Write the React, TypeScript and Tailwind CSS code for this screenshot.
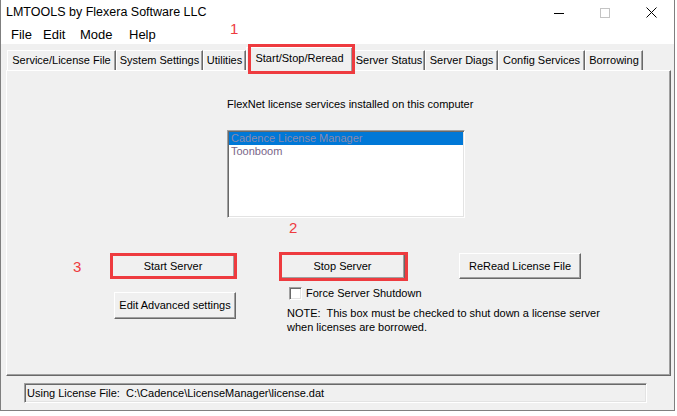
import React from "react";

const font = "font-['Liberation_Sans',Arial,sans-serif]";

// classic win32 3d edges
const raised =
  "border border-t-white border-l-white border-r-[#696969] border-b-[#696969] shadow-[inset_-1px_-1px_0_#a0a0a0]";
const sunken =
  "border border-t-[#a0a0a0] border-l-[#a0a0a0] border-r-white border-b-white shadow-[inset_1px_1px_0_#696969,inset_-1px_-1px_0_#e3e3e3]";

const tabs = [
  { label: "Service/License File", w: "w-[109px]" },
  { label: "System Settings", w: "w-[87px]" },
  { label: "Utilities", w: "w-[43px]" },
  { label: "Start/Stop/Reread", w: "w-[107px]", active: true },
  { label: "Server Status", w: "w-[72px]" },
  { label: "Server Diags", w: "w-[73px]" },
  { label: "Config Services", w: "w-[87px]" },
  { label: "Borrowing", w: "w-[58px]" },
];

function RedBox({ className }: { className: string }) {
  return (
    <div
      className={`pointer-events-none absolute border-[3px] border-[#ee3b3f] ${className}`}
    />
  );
}

function Btn({
  children,
  className,
}: {
  children: React.ReactNode;
  className: string;
}) {
  return (
    <div
      className={`${raised} relative flex shrink-0 items-center justify-center bg-[#f0f0f0] text-[11px] leading-none text-black ${className}`}
    >
      {children}
    </div>
  );
}

export default function App() {
  return (
    <div
      className={`relative h-[416px] w-[677px] overflow-hidden bg-white text-black ${font}`}
    >
      <div className="flex h-[411px] w-[675px] flex-col border-x border-b border-[#7f7f7f] bg-[#f0f0f0]">
        {/* title bar */}
        <div className="flex h-[25px] shrink-0 items-center bg-white">
          <span className="pl-[5px] text-[12.5px] leading-none">
            LMTOOLS by Flexera Software LLC
          </span>
          <div className="ml-auto flex h-full">
            <div className="flex w-[46px] items-center justify-center">
              <svg width="10" height="10" viewBox="0 0 10 10">
                <path d="M0 5.5H10" stroke="#000" strokeWidth="1" />
              </svg>
            </div>
            <div className="flex w-[46px] items-center justify-center">
              <svg width="10" height="10" viewBox="0 0 10 10">
                <rect
                  x="0.5"
                  y="0.5"
                  width="9"
                  height="9"
                  fill="none"
                  stroke="#c4c4c4"
                />
              </svg>
            </div>
            <div className="flex w-[46px] items-center justify-center">
              <svg width="11" height="11" viewBox="0 0 11 11">
                <path
                  d="M0.5 0.5L10.5 10.5M10.5 0.5L0.5 10.5"
                  stroke="#000"
                  strokeWidth="1"
                />
              </svg>
            </div>
          </div>
        </div>

        {/* menu bar */}
        <div className="flex h-[19px] shrink-0 items-center bg-white pl-[10px] text-[13px] leading-none">
          <span className="w-[32px]">File</span>
          <span className="w-[37px]">Edit</span>
          <span className="w-[49px]">Mode</span>
          <span>Help</span>
        </div>

        {/* tabs */}
        <div className="ml-[6px] mt-[3px] flex h-[23px] shrink-0 items-end text-[11px] leading-none">
          {tabs.map((t) =>
            t.active ? (
              <div
                key={t.label}
                className={`${t.w} relative z-10 -mb-px flex h-[24px] items-center justify-center border-l border-r border-t border-l-white border-r-[#696969] border-t-white bg-[#f0f0f0] pb-[2px] shadow-[inset_-1px_0_0_#a0a0a0]`}
              >
                {t.label}
                <RedBox className="left-[1px] top-[-4px] h-[30px] w-[107px]" />
              </div>
            ) : (
              <div
                key={t.label}
                className={`${t.w} flex h-[20px] items-center justify-center border-l border-r border-t border-l-white border-r-[#696969] border-t-white shadow-[inset_-1px_0_0_#a0a0a0]`}
              >
                {t.label}
              </div>
            )
          )}
        </div>

        {/* tab page */}
        <div
          className={`${raised} ml-[5px] flex h-[306px] w-[665px] shrink-0 flex-col text-[11px]`}
        >
          <p className="ml-[220px] mt-[27px] leading-[13px]">
            FlexNet license services installed on this computer
          </p>

          <div
            className={`${sunken} ml-[220px] mt-[19px] h-[88px] w-[238px] bg-white px-[1px] py-[1px]`}
          >
            <div className="bg-[#0078d7] pl-[2px] leading-[13px] text-[#8a8aac]">
              Cadence License Manager
            </div>
            <div className="pl-[2px] leading-[13px] text-[#7a6688]">
              Toonboom
            </div>
          </div>

          <div className="ml-[104px] mt-[35px] flex items-start">
            <div className="flex w-[125px] shrink-0 flex-col">
              <Btn className="h-[26px] w-[124px]">
                Start Server
                <RedBox className="left-[-2px] top-[-1px] h-[26px] w-[127px]" />
              </Btn>
              <Btn className="ml-[3px] mt-[13px] h-[27px] w-[122px]">
                Edit Advanced settings
              </Btn>
            </div>

            <div className="ml-[44px] flex w-[125px] shrink-0 flex-col">
              <Btn className="h-[26px] w-[125px]">
                Stop Server
                <RedBox className="left-[-2px] top-[-2px] h-[29px] w-[129px]" />
              </Btn>
              <div className="ml-[9px] mt-[8px] flex h-[13px] items-center whitespace-nowrap">
                <div
                  className={`${sunken} h-[13px] w-[13px] shrink-0 bg-white`}
                />
                <span className="ml-[4px] leading-none">
                  Force Server Shutdown
                </span>
              </div>
              <p className="ml-[7px] mt-[7px] whitespace-pre leading-[13.5px]">
                {"NOTE:  This box must be checked to shut down a license server\nwhen licenses are borrowed."}
              </p>
            </div>

            <Btn className="ml-[54px] h-[26px] w-[122px]">ReRead License File</Btn>
          </div>
        </div>

        {/* status field */}
        <div
          className={`${sunken} ml-[23px] mt-[7px] flex h-[20px] w-[623px] shrink-0 items-center whitespace-pre pl-[2px] text-[11px] leading-none`}
        >
          {"Using License File:  C:\\Cadence\\LicenseManager\\license.dat"}
        </div>
      </div>

      {/* step annotations */}
      <span className="absolute left-[230px] top-[21px] text-[15px] leading-none text-[#ee3b3f]">
        1
      </span>
      <span className="absolute left-[289px] top-[220px] text-[15px] leading-none text-[#ee3b3f]">
        2
      </span>
      <span className="absolute left-[73px] top-[259px] text-[15px] leading-none text-[#ee3b3f]">
        3
      </span>
    </div>
  );
}
